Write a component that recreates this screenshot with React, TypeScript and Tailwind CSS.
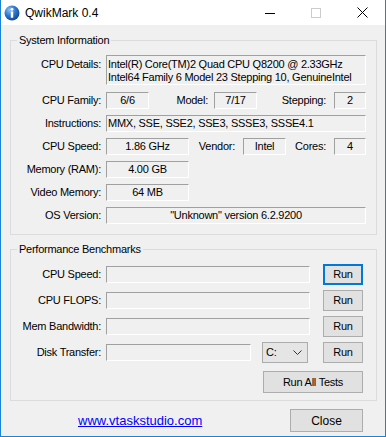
import React from "react"

function Box({ className, children }: { className: string; children?: React.ReactNode }) {
  return (
    <div
      className={
        "h-[17px] flex items-center whitespace-nowrap border border-t-[#a0a0a0] border-l-[#a0a0a0] border-b-white border-r-white " +
        className
      }
    >
      {children}
    </div>
  )
}

function Btn({ className, children }: { className: string; children: React.ReactNode }) {
  return (
    <div className={"flex items-center justify-center bg-[#e1e1e1] border " + className}>
      {children}
    </div>
  )
}

function Label({ className, children }: { className: string; children: React.ReactNode }) {
  return <div className={"text-right whitespace-nowrap " + className}>{children}</div>
}

function BenchRow({ label, focused }: { label: string; focused?: boolean }) {
  return (
    <div className="flex items-center h-[21px]">
      <Label className="w-[90px]">{label}</Label>
      <Box className="ml-[5px] w-[204px]" />
      <Btn
        className={
          focused
            ? "ml-[13px] w-[40px] h-[21px] border-2 border-[#0078d7]"
            : "ml-[13px] w-[40px] h-[21px] border-[#adadad]"
        }
      >
        Run
      </Btn>
    </div>
  )
}

export default function App() {
  return (
    <div className="w-[386px] h-[437px] flex flex-col bg-[#f0f0f0] border-x border-b border-[#1883d7] text-[11px] tracking-[-0.25px] text-black font-['Liberation_Sans',Arial,sans-serif]">
      {/* Title bar */}
      <div className="h-[25px] bg-white flex items-center shrink-0">
        <svg width="16" height="16" viewBox="0 0 16 16" className="ml-[3px]">
          <defs>
            <radialGradient id="ig" cx="0.35" cy="0.3" r="0.75">
              <stop offset="0" stopColor="#8ec2f5" />
              <stop offset="0.5" stopColor="#2f78d0" />
              <stop offset="1" stopColor="#12438f" />
            </radialGradient>
          </defs>
          <circle cx="8" cy="8" r="7.5" fill="url(#ig)" />
          <circle cx="8" cy="4.3" r="1.4" fill="#fff" />
          <rect x="6.8" y="6.5" width="2.4" height="6.2" fill="#fff" />
        </svg>
        <span className="ml-[5px] text-[12px] tracking-normal">QwikMark 0.4</span>
        <div className="flex-1" />
        <div className="w-[46px] h-full flex items-center justify-center">
          <div className="w-[10px] h-px bg-black mt-px" />
        </div>
        <div className="w-[46px] h-full flex items-center justify-center">
          <div className="w-[10px] h-[10px] border border-[#cccccc]" />
        </div>
        <div className="w-[46px] h-full flex items-center justify-center">
          <svg width="11" height="11" viewBox="0 0 11 11">
            <path d="M0.5 0.5 L10.5 10.5 M10.5 0.5 L0.5 10.5" stroke="#000" strokeWidth="1" />
          </svg>
        </div>
      </div>

      {/* System Information */}
      <fieldset className="mx-[9px] mt-[8px] w-[367px] border border-[#dcdcdc] pt-[8px] pb-[10px]">
        <legend className="ml-[6px] px-[2px] leading-[14px]">System Information</legend>
        <div className="flex flex-col gap-[6px]">
          <div className="flex items-start">
            <Label className="w-[90px] leading-[13px] pt-[3px]">CPU Details:</Label>
            <div className="ml-[5px] w-[260px] h-[30px] px-[1px] pt-[2px] leading-[13px] whitespace-nowrap border border-t-[#a0a0a0] border-l-[#a0a0a0] border-b-white border-r-white">
              <div>Intel(R) Core(TM)2 Quad CPU Q8200 @ 2.33GHz</div>
              <div>Intel64 Family 6 Model 23 Stepping 10, GenuineIntel</div>
            </div>
          </div>
          <div className="flex items-center mt-px">
            <Label className="w-[90px]">CPU Family:</Label>
            <Box className="ml-[5px] w-[43px] justify-center">6/6</Box>
            <Label className="w-[59px]">Model:</Label>
            <Box className="ml-[6px] w-[43px] justify-center">7/17</Box>
            <Label className="w-[69px]">Stepping:</Label>
            <Box className="ml-[8px] w-[32px] justify-center">2</Box>
          </div>
          <div className="flex items-center">
            <Label className="w-[90px]">Instructions:</Label>
            <Box className="ml-[5px] w-[260px] px-[1px]">MMX, SSE, SSE2, SSE3, SSSE3, SSSE4.1</Box>
          </div>
          <div className="flex items-center">
            <Label className="w-[90px]">CPU Speed:</Label>
            <Box className="ml-[5px] w-[83px] justify-center">1.86 GHz</Box>
            <Label className="w-[46px]">Vendor:</Label>
            <Box className="ml-[8px] w-[43px] justify-center">Intel</Box>
            <Label className="w-[40px]">Cores:</Label>
            <Box className="ml-[8px] w-[32px] justify-center">4</Box>
          </div>
          <div className="flex items-center">
            <Label className="w-[90px]">Memory (RAM):</Label>
            <Box className="ml-[5px] w-[83px] justify-center">4.00 GB</Box>
          </div>
          <div className="flex items-center">
            <Label className="w-[90px]">Video Memory:</Label>
            <Box className="ml-[5px] w-[83px] justify-center">64 MB</Box>
          </div>
          <div className="flex items-center">
            <Label className="w-[90px]">OS Version:</Label>
            <Box className="ml-[5px] w-[260px] justify-center">"Unknown" version 6.2.9200</Box>
          </div>
        </div>
      </fieldset>

      {/* Performance Benchmarks */}
      <fieldset className="mx-[9px] mt-[7px] w-[367px] border border-[#dcdcdc] pt-[8px] pb-[7px]">
        <legend className="ml-[6px] px-[2px] leading-[14px]">Performance Benchmarks</legend>
        <div className="flex flex-col gap-[5px]">
          <BenchRow label="CPU Speed:" focused />
          <BenchRow label="CPU FLOPS:" />
          <BenchRow label="Mem Bandwidth:" />
          <div className="flex items-center h-[21px]">
            <Label className="w-[90px]">Disk Transfer:</Label>
            <Box className="ml-[5px] w-[145px]" />
            <div className="ml-[11px] w-[46px] h-[21px] flex items-center justify-between pl-[3px] pr-[5px] bg-[#e5e5e5] border border-[#acacac]">
              <span>C:</span>
              <svg width="9" height="5" viewBox="0 0 9 5">
                <path d="M0.5 0.5 L4.5 4.5 L8.5 0.5" stroke="#333" strokeWidth="1" fill="none" />
              </svg>
            </div>
            <Btn className="ml-[15px] w-[40px] h-[21px] border-[#adadad]">Run</Btn>
          </div>
          <div className="flex mt-[3px]">
            <Btn className="ml-auto mr-[13px] w-[100px] h-[22px] border-[#adadad]">Run All Tests</Btn>
          </div>
        </div>
      </fieldset>

      {/* Footer */}
      <div className="flex items-center mt-[8px] h-[23px]">
        <a className="ml-[77px] text-[13px] tracking-normal text-[#0000ff] underline">www.vtaskstudio.com</a>
        <Btn className="ml-auto mr-[22px] w-[73px] h-[23px] border-[#adadad] text-[12px] tracking-normal">Close</Btn>
      </div>
    </div>
  )
}
